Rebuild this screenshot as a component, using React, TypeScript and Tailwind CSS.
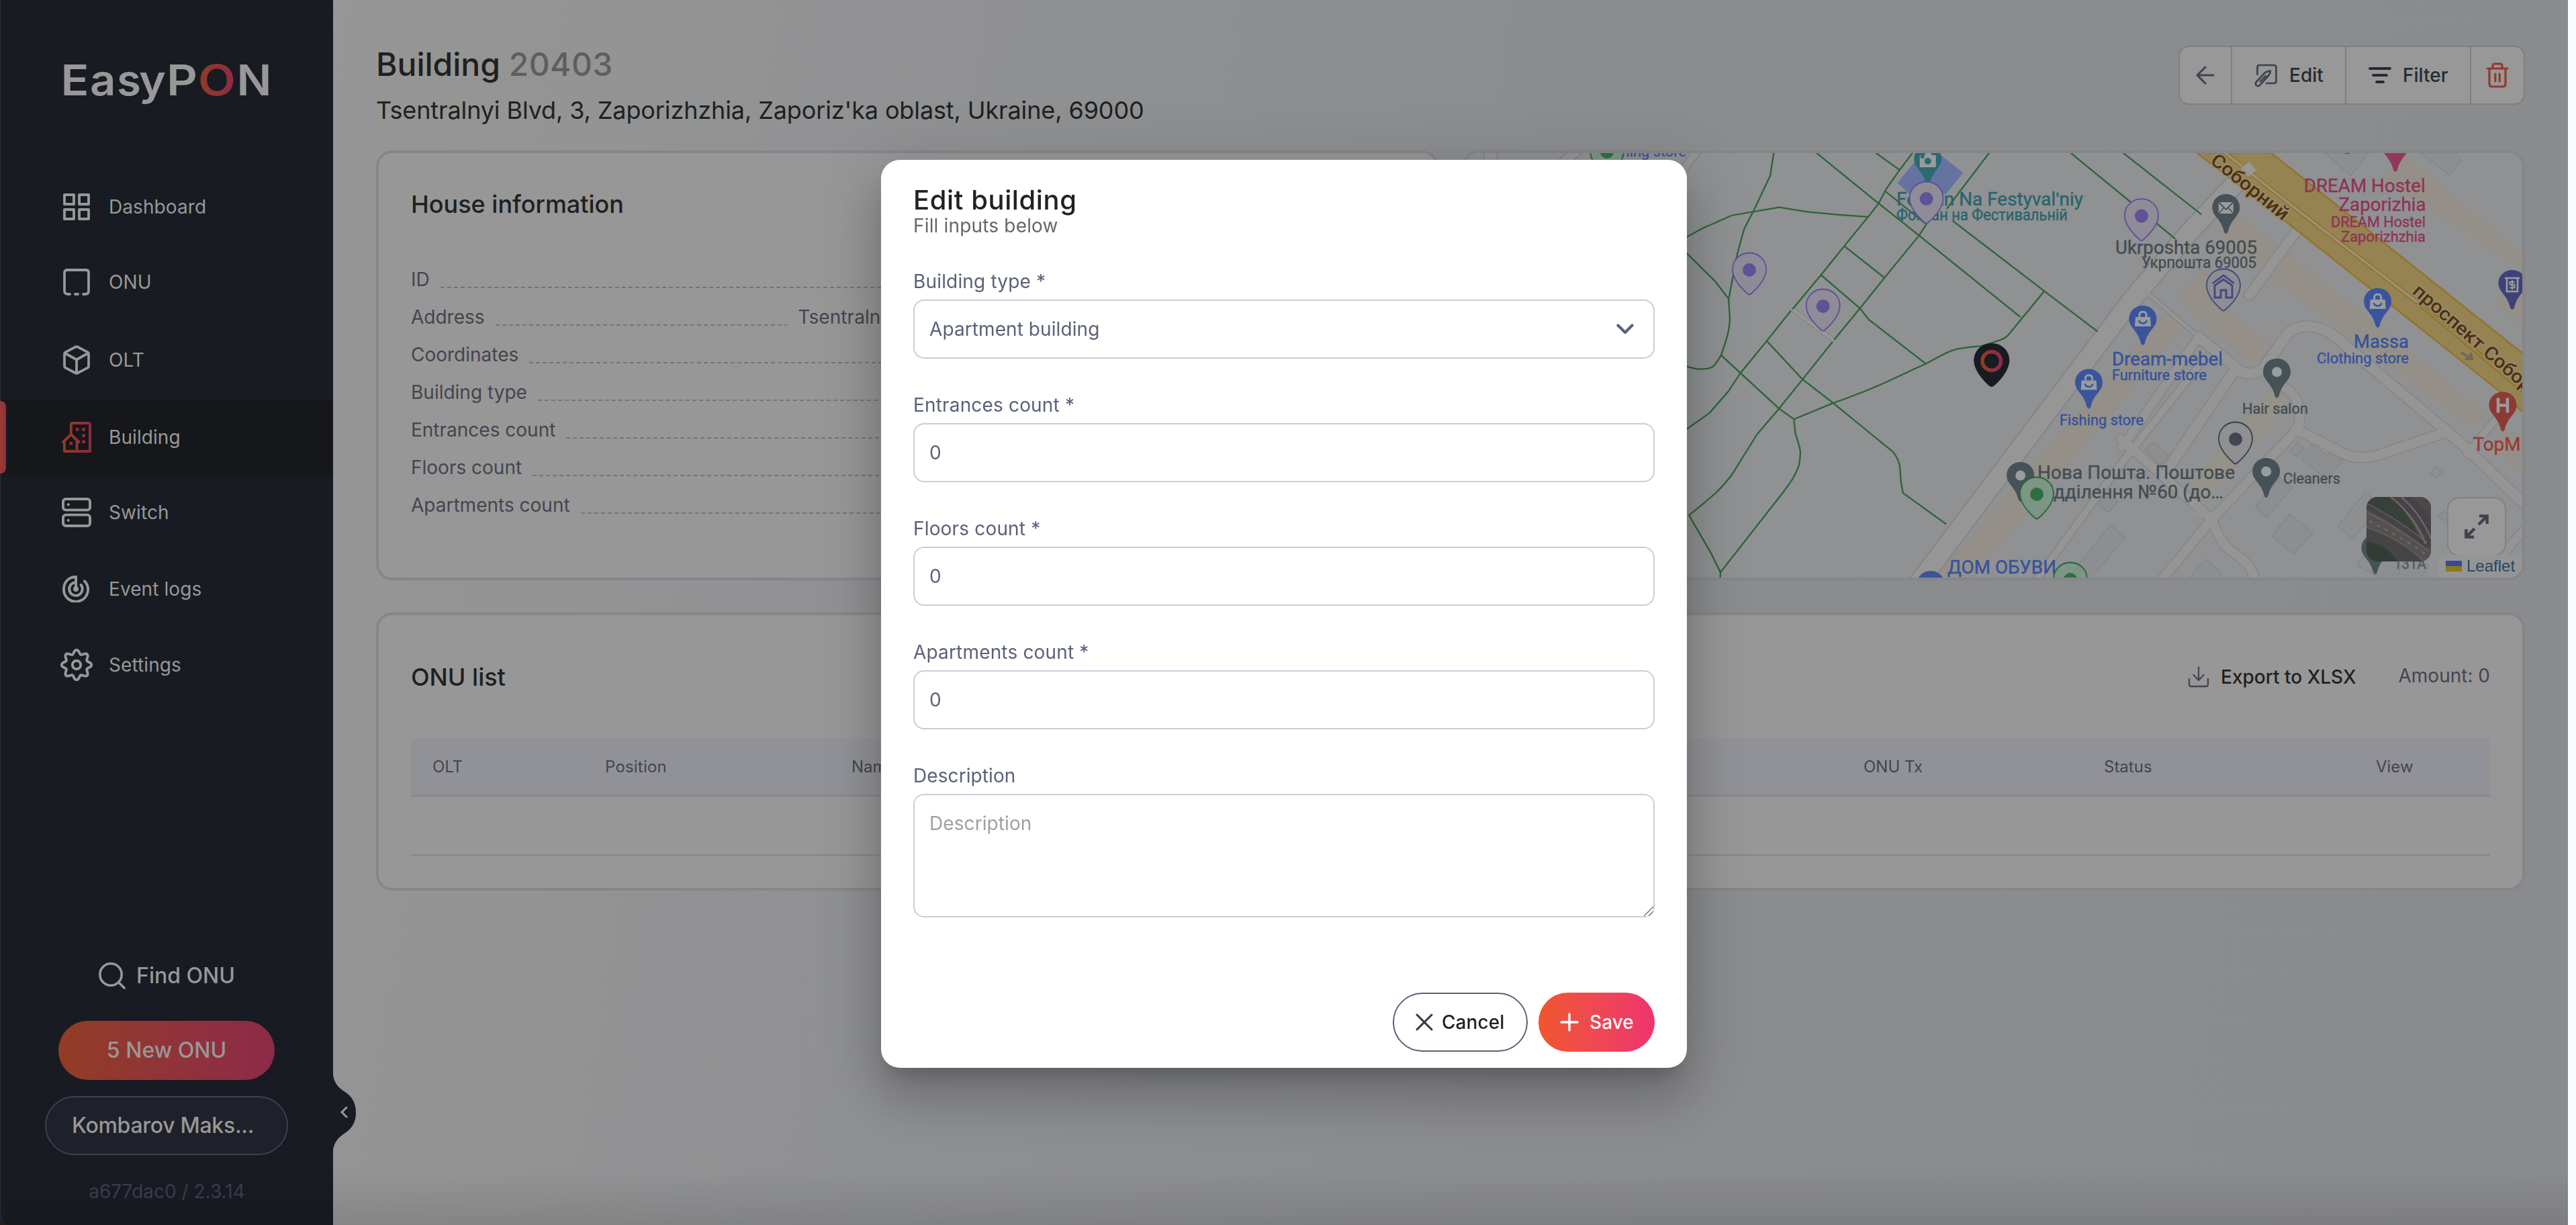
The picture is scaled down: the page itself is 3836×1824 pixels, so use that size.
import React from "react";

const ROADS_EAST: { d: string; w: number }[] = [
  { d: "M265,680 L395,790 C430,825 475,815 500,775 L560,685 C595,625 690,625 760,700 L1090,990 L1190,1080 L1400,1290", w: 36 },
  { d: "M600,1010 L740,1085 C800,1120 830,1115 880,1105 L1110,1025", w: 34 },
  { d: "M550,855 C610,885 625,940 608,1010 L460,1170 L310,1335 L130,1560", w: 32 },
  { d: "M385,805 L160,1150", w: 36 },
  { d: "M262,685 L0,1075", w: 30 },
  { d: "M-5,1045 L310,1335 C340,1420 360,1440 400,1465 C435,1490 455,1520 460,1560", w: 32 },
  { d: "M598,305 L440,530", w: 34 },
  { d: "M80,515 L265,680", w: 12 },
  { d: "M1190,1100 L1300,965", w: 24 },
  { d: "M1400,1360 L1230,1560", w: 30 },
];

const PATHS_WEST = [
  "M326,18 L314,100 L255,230 L225,290 C205,360 195,400 190,440 L171,545 L175,610 C175,660 160,700 145,745 C120,790 115,795 75,795 C50,795 35,788 0,775",
  "M0,335 L28,320 L80,290 L182,243 L345,214 L440,230 L550,241 L650,248",
  "M0,345 L28,380 L125,480 L171,543",
  "M472,18 L686,200 L825,315 L1173,608",
  "M676,18 L758,80",
  "M803,18 L758,80 L711,150 L686,200 L650,248 L568,353 L488,457 L390,580",
  "M385,585 L302,694 L211,810 L170,875 L105,953 L0,1030",
  "M1066,18 L970,150 L920,220",
  "M850,275 L825,315 L706,467 L622,577 L533,690",
  "M528,697 L425,832 L344,937 L268,1030 L185,1170 C150,1220 130,1240 35,1320 L110,1455 L143,1525 L141,1560",
  "M711,158 L850,275",
  "M568,353 L706,467",
  "M488,457 L622,577 L652,617 L848,776",
  "M302,694 L425,832 L530,917 L735,1092 C750,1112 757,1130 759,1145 C761,1190 765,1220 770,1240 L918,1352",
  "M145,745 L344,937 L395,975",
  "M395,975 L530,917 C700,855 750,820 848,776 C940,725 930,722 1040,712 C1120,685 1120,690 1145,655 L1255,515",
  "M395,975 L400,1025 C420,1090 420,1090 413,1140 C395,1190 380,1205 360,1235 L143,1525",
  "M940,262 L1255,515 L1438,660",
  "M1345,18 L1705,327",
  "M1525,18 L1795,240",
];

const GRAY_BUILDINGS = [
  "M110,1058 L160,1105 L130,1140 L80,1085 Z",
  "M605,1058 L630,1080 L602,1110 L580,1090 Z",
  "M655,1065 L710,1105 L725,1090 L765,1125 L705,1190 L618,1115 Z",
  "M545,1185 L588,1220 L500,1328 L460,1290 Z",
  "M580,1315 L660,1385 L635,1410 L592,1460 L517,1395 Z",
  "M840,1237 L900,1290 L795,1403 L745,1360 Z",
  "M1085,1145 L1108,1165 L1085,1188 L1065,1168 Z",
  "M1110,1305 L1145,1335 L1130,1352 L1092,1325 Z",
  "M290,1478 L346,1530 L320,1560 L220,1560 Z",
  "M700,18 L850,18 L790,100 Z",
  "M1030,18 L1155,18 L1172,45 L1130,98 Z",
  "M865,1420 L960,1500 L920,1560 L810,1500 Z",
  "M980,1470 L1060,1500 L1020,1560 L940,1560 Z",
];

type Pin = { x: number; y: number; stroke: string; fill: string; dot?: string };
const PINS: Pin[] = [
  { x: 2605, y: 402, stroke: "#5c4f9a", fill: "#8f8c98", dot: "#5f5297" },
  { x: 2714.7, y: 456, stroke: "#5c4f9a", fill: "#8f8c98", dot: "#5f5297" },
  { x: 2868.6, y: 296, stroke: "#5c4f9a", fill: "#8f8c98", dot: "#5f5297" },
  { x: 3189, y: 321.6, stroke: "#5c4f9a", fill: "#8f8c98", dot: "#5f5297" },
  { x: 3033, y: 736, stroke: "#22683a", fill: "#7d9584", dot: "#2e6f41" },
  { x: 3083, y: 863, stroke: "#22683a", fill: "#7d9584", dot: "#2e6f41" },
  { x: 2393, y: 226, stroke: "#22683a", fill: "#7d9584", dot: "#2e6f41" },
  { x: 3329, y: 654, stroke: "#3b3e4a", fill: "#8e9092", dot: "#43454f" },
  { x: 3311, y: 426, stroke: "#45487a", fill: "#8c8d95" },
];

type Place = { x: number; y: number; fill: string; kind: "dot" | "bag" | "mail" | "camera" | "bank" | "hotel" };
const PLACES: Place[] = [
  { x: 2870.8, y: 237, fill: "#2a6a72", kind: "camera" },
  { x: 3314.8, y: 309, fill: "#465257", kind: "mail" },
  { x: 3191, y: 475, fill: "#3a549c", kind: "bag" },
  { x: 3110.6, y: 569.5, fill: "#3a549c", kind: "bag" },
  { x: 3008.7, y: 708, fill: "#465257", kind: "dot" },
  { x: 3390.6, y: 553.7, fill: "#465257", kind: "dot" },
  { x: 3540.7, y: 449, fill: "#3a549c", kind: "bag" },
  { x: 3374.7, y: 702, fill: "#465257", kind: "dot" },
  { x: 3727, y: 603.5, fill: "#8d3a35", kind: "hotel" },
  { x: 3741, y: 422, fill: "#3f4278", kind: "bank" },
  { x: 3567, y: 217, fill: "#94385a", kind: "dot" },
  { x: 2875, y: 870, fill: "#3a549c", kind: "dot" },
  { x: 3537, y: 816, fill: "#465257", kind: "dot" },
];

type Label = { t: string; x: number; y: number; w: number; s: number; c: string };
const TEAL = "#28646b";
const SLATE = "#434c52";
const BLUE = "#35519a";
const ROSE = "#8f3353";
const LABELS: Label[] = [
  { t: "Fontan Na Festyvalʹniy", x: 2824, y: 306, w: 278, s: 28, c: TEAL },
  { t: "Фонтан на Фестивальній", x: 2824, y: 328, w: 255, s: 23, c: TEAL },
  { t: "Ukrposhta 69005", x: 3150, y: 377.6, w: 211, s: 28, c: SLATE },
  { t: "Укрпошта 69005", x: 3189, y: 399, w: 171, s: 23, c: SLATE },
  { t: "Dream-mebel", x: 3145, y: 544, w: 165, s: 28, c: BLUE },
  { t: "Furniture store", x: 3145, y: 566, w: 141, s: 22, c: BLUE },
  { t: "Fishing store", x: 3067, y: 633, w: 125, s: 22, c: BLUE },
  { t: "Massa", x: 3505, y: 517.6, w: 82, s: 28, c: BLUE },
  { t: "Clothing store", x: 3450, y: 541, w: 137, s: 22, c: BLUE },
  { t: "Hair salon", x: 3339, y: 616, w: 98, s: 22, c: SLATE },
  { t: "Нова Пошта. Поштове", x: 3034, y: 713, w: 294, s: 28, c: SLATE },
  { t: "Відділення №60 (до…", x: 3034, y: 741.5, w: 277, s: 28, c: SLATE },
  { t: "Cleaners", x: 3400, y: 719.5, w: 85, s: 22, c: SLATE },
  { t: "DREAM Hostel", x: 3430.7, y: 285.5, w: 181, s: 28, c: ROSE },
  { t: "Zaporizhia", x: 3482.5, y: 314, w: 130, s: 28, c: ROSE },
  { t: "DREAM Hostel", x: 3471, y: 338, w: 141, s: 22, c: ROSE },
  { t: "Zaporizhzhia", x: 3486, y: 360, w: 126, s: 22, c: ROSE },
  { t: "TopM", x: 3682.5, y: 671, w: 71, s: 28, c: "#963a35" },
  { t: "131A", x: 3565, y: 847, w: 48, s: 22, c: "#55585c" },
  { t: "ДОМ ОБУВИ", x: 2900, y: 854, w: 162, s: 28, c: BLUE },
  { t: "Fishing store", x: 2386, y: 233, w: 125, s: 22, c: "#3a549c" },
];

function PlaceGlyph({ kind }: { kind: Place["kind"] }) {
  const c = "#999c9e";
  if (kind === "bag")
    return (
      <g fill="none" stroke={c}>
        <path d="M-11,-3 H11 L12,11 H-12 Z" fill={c} stroke="none" />
        <path d="M-5,-3 V-7 C-5,-12 5,-12 5,-7 V-3" strokeWidth="3" />
        <path d="M-6,2 C-4,8 4,8 6,2" stroke="#3a549c" strokeWidth="2.4" />
      </g>
    );
  if (kind === "mail")
    return (
      <g>
        <rect x="-11" y="-8" width="22" height="17" fill={c} />
        <path d="M-11,-8 L0,3 L11,-8 M-11,9 L-3,0 M11,9 L3,0" fill="none" stroke="#465257" strokeWidth="1.8" />
      </g>
    );
  if (kind === "camera")
    return (
      <g>
        <path d="M-11,-6 H-5 L-3,-9 H4 L6,-6 H12 V12 H-12 V-6 Z" fill={c} />
        <circle cx="0" cy="3" r="5" fill="#2a6a72" />
        <circle cx="-8" cy="-4" r="3" fill="#2a6a72" />
      </g>
    );
  if (kind === "bank")
    return (
      <g fill="none" stroke={c}>
        <path d="M-11,-8 H11 M-8,-8 V12 H8 V-8" strokeWidth="2.6" />
        <path d="M4,-2 H-3.5 V2 H3.5 V6.5 H-4 M0,-5 V9.5" strokeWidth="2" />
      </g>
    );
  if (kind === "hotel") return <path d="M-7,-11 V11 M7,-11 V11 M-7,0 H7" fill="none" stroke={c} strokeWidth="4.5" />;
  return <circle r="7.5" fill={c} />;
}

function CityMap() {
  return (
    <svg className="absolute inset-0 h-full w-full" viewBox="2182 228 1574 632" preserveAspectRatio="none" fontFamily="Roboto, sans-serif">
      <rect x="2182" y="228" width="1574" height="632" fill="#8f9193" />
      <g fill="none" stroke="#838486">
        <path d="M2214,262 L2222,222" strokeWidth="22" />
        <path d="M2214,262 L2222,222" stroke="#949494" strokeWidth="18" />
        <path d="M2320,250 L2350,222" strokeWidth="18" />
        <path d="M2320,250 L2350,222" stroke="#949494" strokeWidth="14" />
        <path d="M2508,250 L2530,222" strokeWidth="14" />
        <path d="M2508,250 L2530,222" stroke="#949494" strokeWidth="10" />
      </g>

      {/* Tinted blocks along the avenue */}
      <g transform="translate(3160 220) scale(0.43113 0.41454)" fill="#949089" stroke="#97877a" strokeWidth="2">
        <path d="M390,225 L1255,945 L1210,1010 L330,330 Z" stroke="none" />
        <path d="M290,415 L188,550 L465,787 L515,712 L345,560 Z" />
        <path d="M165,570 L225,625 L-20,930 L-720,1800 L-860,1800 L-20,800 Z" />
        <path d="M975,18 L1400,395 L1400,455 L900,110 Z" stroke="none" />
        <path d="M1325,510 L1285,562 L1400,650 L1400,500 Z" />
        <path d="M1310,1010 L1270,1085 L1400,1185 L1400,1050 Z" stroke="none" />
        <path d="M520,860 L575,905 L290,1270 L235,1215 Z" fill="#95928a" stroke="#978c6e" />
      </g>
      <g transform="translate(3160 220) scale(0.43113 0.41454)" fill="#8c8e90" stroke="#828486" strokeWidth="3">
        {GRAY_BUILDINGS.map((d) => (
          <path key={d} d={d} />
        ))}
        <path d="M-40,1355 L10,1400 L-150,1600 L-230,1600 Z" />
        <path d="M-70,1245 L-15,1270 L-45,1310 L-80,1285 Z" />
        <path d="M20,1085 L90,1150 L60,1200 L0,1130 Z" fill="none" />
      </g>

      {/* Streets */}
      <g transform="translate(3160 220) scale(0.43113 0.41454)" fill="none" strokeLinejoin="round" strokeLinecap="round">
        <path d="M-730,1600 L35,545 L235,300 L390,130 L470,20" stroke="#808284" strokeWidth="72" />
        <path d="M-330,1600 L0,1130 L260,790" stroke="#808284" strokeWidth="30" />
        {ROADS_EAST.map((r) => (
          <path key={r.d} d={r.d} stroke="#818385" strokeWidth={r.w + 6} />
        ))}
        <path d="M-730,1600 L35,545 L235,300 L390,130 L470,20" stroke="#969696" strokeWidth="64" />
        <path d="M-330,1600 L0,1130 L260,790" stroke="#959595" strokeWidth="24" />
        {ROADS_EAST.map((r) => (
          <path key={r.d} d={r.d} stroke="#959596" strokeWidth={r.w} />
        ))}
        <path d="M240,1310 L310,1335 M200,1220 L290,1330" stroke="#959596" strokeWidth="10" />
      </g>

      {/* Park paths */}
      <g transform="translate(2500 220) scale(0.43367 0.41454)" fill="none">
        <path d="M751,126 L835,18 L890,18 L976,90 L918,165 L800,175 Z" fill="#6573a0" />
        <path d="M390,580 L533,692" stroke="#808284" strokeWidth="16" />
        <path d="M390,580 L533,692" stroke="#979797" strokeWidth="11" />
        <g stroke="#2e6336" strokeWidth="5.4" strokeLinejoin="round">
          {PATHS_WEST.map((d) => (
            <path key={d} d={d} />
          ))}
        </g>
      </g>

      {/* Avenue */}
      <g transform="translate(3160 220) scale(0.43113 0.41454)" fill="none">
        <path d="M258,18 L515,18 L1400,752 L1400,965 L1310,880 L590,285 Z" fill="#958352" stroke="#94711f" strokeWidth="5" />
        <path d="M355,18 L620,235 L1020,555 L1400,885" stroke="#94711f" strokeWidth="16" />
        <path d="M355,18 L620,235 L1020,555" stroke="#98907c" strokeWidth="9" />
        <path d="M1020,555 L1400,885" stroke="#958352" strokeWidth="8" />
        <path d="M425,62 L450,92" stroke="#989898" strokeWidth="36" />
        <path d="M1172,735 L1200,755" stroke="#6f6a55" strokeWidth="8" />
        <path d="M1182,762 L1215,763 L1207,733 Z" fill="#6f6a55" />
        <path d="M770,18 L785,18" stroke="#6b3a10" strokeWidth="8" />
      </g>

      {PLACES.map((p) => (
        <g key={`${p.x}-${p.y}`} transform={`translate(${p.x} ${p.y})`}>
          <path d="M0,-20 C12,-20 20.5,-11 20.5,0 C20.5,13 7,17 3,36 Q0,42 -3,36 C-7,17 -20.5,13 -20.5,0 C-20.5,-11 -12,-20 0,-20 Z" fill={p.fill} />
          <PlaceGlyph kind={p.kind} />
        </g>
      ))}

      <g strokeLinejoin="round">
        {LABELS.map((l) => (
          <text key={`${l.t}-${l.x}-${l.y}`} x={l.x} y={l.y} fontSize={l.s} fontWeight="400" fill={l.c} stroke={l.c} strokeWidth="0.4" textLength={l.w} lengthAdjust="spacingAndGlyphs">
            {l.t}
          </text>
        ))}
      </g>
      <g fontWeight="500" fontSize="28" fill="#4f3010" stroke="#958a6a" strokeWidth="4" paintOrder="stroke" strokeLinejoin="round">
        <text transform="translate(3290 242) rotate(38.5)" textLength="140" lengthAdjust="spacingAndGlyphs">Соборний</text>
        <text transform="translate(3591 436) rotate(41)" textLength="278" lengthAdjust="spacingAndGlyphs">проспект Соборний</text>
      </g>

      {PINS.map((p) => (
        <g key={`${p.x}-${p.y}`} transform={`translate(${p.x} ${p.y})`}>
          <path d="M0,-25.5 C14,-25.5 25,-14.5 25,-1 C25,14 11,28 2.5,35.5 Q0,37.5 -2.5,35.5 C-11,28 -25,14 -25,-1 C-25,-14.5 -14,-25.5 0,-25.5 Z" fill={p.fill} stroke={p.stroke} strokeWidth="1.8" />
          {p.dot ? (
            <circle r="10" fill={p.dot} />
          ) : (
            <path d="M-16,-4 L0,-16 L16,-4 M-13,-1 V17 H-4 V6 H4 V17 H13 V-1 L0,-10 Z" fill="none" stroke="#45487a" strokeWidth="2.8" />
          )}
        </g>
      ))}
      <g transform="translate(2965.8 537.5)">
        <path d="M0,-26.5 C15,-26.5 26.5,-15 26.5,-1 C26.5,14 12,30 3,37.5 Q0,39.5 -3,37.5 C-12,30 -26.5,14 -26.5,-1 C-26.5,-15 -15,-26.5 0,-26.5 Z" fill="#191b22" />
        <circle r="13.8" fill="none" stroke="url(#brand)" strokeWidth="5.4" />
      </g>
    </svg>
  );
}

function Satellite() {
  return (
    <svg className="h-24 w-24" viewBox="0 0 96 96">
      <rect width="96" height="96" fill="#504e4d" />
      <path d="M8,0 H36 Q62,22 80,62 L56,48 L0,10 V6 Z" fill="#374039" />
      <path d="M0,14 L88,70 L96,96 L70,96 L0,50 Z" fill="#565151" />
      <path d="M0,14 Q50,40 92,74" fill="none" stroke="#45424a" strokeWidth="8" />
      <path d="M0,9 Q50,35 90,68 M0,22 Q50,48 94,81" fill="none" stroke="#6b665f" strokeWidth="1.2" />
      <path d="M4,36 Q50,58 92,88" fill="none" stroke="#77716c" strokeWidth="1.6" strokeDasharray="5 8" />
      <path d="M0,46 Q50,62 84,96 H44 Q24,70 0,66 Z" fill="#454545" />
      <path d="M0,45 Q50,62 84,94" fill="none" stroke="#66615b" strokeWidth="1.2" />
      <path d="M0,66 Q30,70 46,96 H0 Z" fill="#323c35" />
      <path d="M38,0 Q76,30 92,70 L96,80 V0 Z" fill="#474249" />
      <path d="M36,0 Q70,26 88,70 M52,0 Q80,24 96,62" fill="none" stroke="#726c65" strokeWidth="2" />
      <path d="M66,0 Q86,14 96,34 V0 Z" fill="#4b4847" />
    </svg>
  );
}

const icon = "fill-none stroke-current";

function gearPath() {
  const pts: string[] = [];
  for (let i = 0; i < 160; i++) {
    const a = (i / 160) * Math.PI * 2;
    const r = 19.4 + 2.9 * Math.cos(8 * a);
    pts.push(`${(24 + r * Math.sin(a)).toFixed(2)},${(24 - r * Math.cos(a)).toFixed(2)}`);
  }
  return `M${pts.join("L")}Z`;
}

function DashboardIcon() {
  return (
    <svg className={`h-10 w-10 ${icon}`} viewBox="0 0 40 40" strokeWidth="3.9" strokeLinejoin="round">
      <path d="M2,2 H16 V16 H2 Z M24,2 H38 V16 H24 Z M2,24 H16 V38 H2 Z M24,24 H38 V38 H24 Z" />
    </svg>
  );
}
function OnuIcon() {
  return (
    <svg className={`h-10 w-10 ${icon}`} viewBox="0 0 40 40" strokeWidth="3.8" strokeLinecap="round">
      <path d="M10,38 H7 Q2,38 2,33 V6 Q2,2 6,2 H34 Q38,2 38,6 V33 Q38,38 33,38 H30 M18,38 H22" />
    </svg>
  );
}
function CubeIcon() {
  return (
    <svg className={`h-11 w-10 ${icon}`} viewBox="0 0 40 44" strokeWidth="3.8" strokeLinejoin="round">
      <path d="M18.5,2.5 Q20,1.7 21.5,2.5 L36.5,10.4 Q38,11.4 38,13 V31 Q38,32.8 36.5,33.6 L21.5,41.5 Q20,42.3 18.5,41.5 L3.5,33.6 Q2,32.8 2,31 V13 Q2,11.4 3.5,10.4 Z M3,12 L20,21.5 L37,12 M20,21.5 V42" />
    </svg>
  );
}
function BuildingIcon() {
  return (
    <svg className="h-[46px] w-11" viewBox="0 0 44 46" fill="none" stroke="url(#brand)" strokeWidth="3.9" strokeLinejoin="round" strokeLinecap="round">
      <path d="M13.8,18 V5 Q13.8,2 16.8,2 H39 Q42,2 42,5 V44 H3.9 V31 M2,30 L13.8,19 L25.5,30 M22.5,29 V44" />
      <path d="M20.8,11.5 h4.4 M30.3,11.5 h4.4 M30.3,20.5 h4.4 M30.3,29.8 h4.4 M11.5,32.2 h4.4" strokeLinecap="butt" strokeWidth="4.4" stroke="#913038" />
    </svg>
  );
}
function SwitchIcon() {
  return (
    <svg className={`h-11 w-11 ${icon}`} viewBox="0 0 44 44" strokeWidth="3.9">
      <rect x="2" y="2" width="40" height="16.4" rx="4" />
      <rect x="2" y="25.6" width="40" height="16.4" rx="4" />
      <circle cx="9.7" cy="10.2" r="2" className="fill-current stroke-none" />
      <circle cx="9.7" cy="33.8" r="2" className="fill-current stroke-none" />
    </svg>
  );
}
function EventIcon() {
  return (
    <svg className={`mr-0.5 h-10 w-10 ${icon}`} viewBox="0 0 40 40" strokeWidth="3.9" strokeLinecap="round">
      <path d="M20,20 V2 C9,2 2,10 2,20 A18,18 0 1 0 33,8.4" />
      <path d="M18,10.4 A9.8,9.8 0 1 0 27.5,13.8" />
      <circle cx="20" cy="20" r="4" className="fill-current stroke-none" />
    </svg>
  );
}
function SettingsIcon() {
  return (
    <svg className={`h-12 w-12 ${icon}`} viewBox="0 0 48 48" strokeWidth="3.9" strokeLinejoin="round">
      <path d={gearPath()} />
      <circle cx="24" cy="24" r="6.2" />
    </svg>
  );
}

const NAV = [
  { label: "Dashboard", Icon: DashboardIcon, box: "h-28" },
  { label: "ONU", Icon: OnuIcon, box: "h-28" },
  { label: "OLT", Icon: CubeIcon, box: "h-[119px]" },
  { label: "Building", Icon: BuildingIcon, box: "h-28", active: true },
  { label: "Switch", Icon: SwitchIcon, box: "h-28" },
  { label: "Event logs", Icon: EventIcon, box: "h-[115px]" },
  { label: "Settings", Icon: SettingsIcon, box: "h-28" },
];

function Sidebar() {
  return (
    <aside className="relative flex h-full w-[496px] shrink-0 flex-col rounded-bl-[14px] border-l border-[#2b2f36] bg-[#181b22] pt-20 text-[#989898]">
      <svg className="ml-[83px] h-[90px] w-[330px]" viewBox="84 80 330 90" fontFamily="Inter, sans-serif" fontWeight="600" fontSize="63" fill="#989898">
        <defs>
          <linearGradient id="brand" x1="0" x2="1" y1="0" y2="0">
            <stop offset="0" stopColor="#923c24" />
            <stop offset="1" stopColor="#8e2a48" />
          </linearGradient>
        </defs>
        <text y="142" x="90.5" textLength="42" lengthAdjust="spacingAndGlyphs">E</text>
        <text y="142" x="134" textLength="38.5" lengthAdjust="spacingAndGlyphs">a</text>
        <text y="142" x="174" textLength="36" lengthAdjust="spacingAndGlyphs">s</text>
        <text y="142" x="207" textLength="40" lengthAdjust="spacingAndGlyphs">y</text>
        <text y="142" x="248" textLength="46" lengthAdjust="spacingAndGlyphs">P</text>
        <text y="142" x="295" fill="url(#brand)" textLength="56" lengthAdjust="spacingAndGlyphs">O</text>
        <text y="142" x="352.5" textLength="52" lengthAdjust="spacingAndGlyphs">N</text>
      </svg>

      <nav className="mt-[82px] flex flex-col">
        {NAV.map(({ label, Icon, box, active }) => (
          <a key={label} className={`relative flex items-center pl-[83px] text-[28px] leading-none ${box} ${active ? "bg-[#16171a]" : ""}`}>
            {active && <span className="absolute top-0.5 -left-px h-[108px] w-[9px] rounded-r-lg bg-linear-to-r from-[#973f2c] to-[#8e2c46]" />}
            <span className="flex w-15 justify-center">
              <Icon />
            </span>
            <span className="ml-[18px] tracking-[0.003em]">{label}</span>
          </a>
        ))}
      </nav>

      <div className="mt-auto flex flex-col items-center pb-[30px] font-medium">
        <div className="flex h-[88px] w-[392px] items-center justify-center rounded-lg border border-[#16191d] pt-0.5 text-[32px]">
          <svg className={`mr-4 h-10 w-10 ${icon}`} viewBox="0 0 40 40" strokeWidth="3.6" strokeLinecap="round">
            <circle cx="18" cy="18" r="16.2" />
            <path d="M30,30 L38,38" />
          </svg>
          Find ONU
        </div>
        <div className="mt-6 mr-px flex h-[88px] w-[322px] items-center justify-center rounded-full bg-linear-to-r from-[#923c24] to-[#8e2a48] text-[32px]">5 New ONU</div>
        <div className="mt-6 mr-px flex h-[88px] w-[362px] items-center rounded-full border-2 border-[#3d404f] bg-[#1e2129] pl-[38px] text-[32px] tracking-[-0.009em]">Kombarov Maks...</div>
        <div className="mt-[34px] text-[28px] leading-10 font-normal text-[#3c3e4e]">a677dac0 / 2.3.14</div>
      </div>

      <svg className="absolute top-[1601px] left-[494px] z-10 h-28 w-9" viewBox="-1 0 36 112">
        <path d="M-1,0 H0 C2,12 8,18 15,23 C25,29 34,38 34,55.5 C34,73 25,82 15,88 C8,93 2,99 0,111 H-1 Z" fill="#181b22" />
        <path d="M20,48 L13,55 L20,62" fill="none" stroke="#989898" strokeWidth="3" strokeLinecap="round" />
      </svg>
    </aside>
  );
}

function Toolbar() {
  return (
    <div className="mt-0.5 flex h-[88px] w-[516px] divide-x-2 divide-[#7c7e83] overflow-hidden rounded-2xl border-2 border-[#7c7e83] bg-[#989898] text-[28px] font-medium text-[#252a34]">
      <div className="flex w-[78px] items-center justify-center">
        <svg className={`h-7 w-7 text-[#3f424e] ${icon}`} viewBox="0 0 28 28" strokeWidth="3" strokeLinecap="round" strokeLinejoin="round">
          <path d="M26,14 H2 M14,2 L2,14 L14,26" />
        </svg>
      </div>
      <div className="flex w-[170px] items-center pl-[33px]">
        <svg className={`mr-[17px] h-[35px] w-[35px] text-[#3f424e] ${icon}`} viewBox="0 0 35 35" strokeWidth="2.7" strokeLinecap="round" strokeLinejoin="round">
          <path d="M4.5,16 V5 Q4.5,2 7.5,2 H29 Q32.5,2 32.5,5.5 V25.5 Q32.5,29 29,29 H18" />
          <path d="M23.8,10.6 Q18,11 14.5,14.5 L3,27 C0,31 4.5,35 8,32 L20,18.8 Q23.6,15 23.8,10.6 Z M17,18 L9,26" />
        </svg>
        Edit
      </div>
      <div className="flex w-[186px] items-center pl-[33px]">
        <svg className={`mr-[17px] h-6 w-[34px] ${icon}`} viewBox="0 0 34 24" strokeWidth="3.8" strokeLinecap="round">
          <path d="M2,2 H32 M7,12 H27 M12,22 H22" />
        </svg>
        Filter
      </div>
      <div className="flex flex-1 items-center justify-center">
        <svg className={`h-[38px] w-[34px] text-[#93382e] ${icon}`} viewBox="0 0 34 38" strokeWidth="3.2" strokeLinecap="round" strokeLinejoin="round">
          <path d="M2,9 H32 M10,9 V5 Q10,2 13,2 H21 Q24,2 24,5 V9 M5,9 V32 Q5,36 9,36 H25 Q29,36 29,32 V9 M13.8,17 V28 M20.2,17 V28" />
        </svg>
      </div>
    </div>
  );
}

const ADDRESS = "Tsentralnyi Blvd, 3, Zaporizhzhia, Zaporiz'ka oblast, Ukraine, 69000";
const INFO = [
  { k: "ID", v: "20403" },
  { k: "Address", v: ADDRESS },
  { k: "Coordinates", v: "" },
  { k: "Building type", v: "Apartment building" },
  { k: "Entrances count", v: "0" },
  { k: "Floors count", v: "0" },
  { k: "Apartments count", v: "0" },
];

const card = "relative overflow-hidden rounded-3xl border-4 border-[#85868b] bg-[#979797]";

function Page() {
  return (
    <main className="flex h-full flex-1 flex-col bg-[linear-gradient(100deg,#969696_0%,#8f9092_30%,#8b8c8e_55%,#8a8b8d_100%)] px-16 pt-[66px]">
      <header className="flex h-[120px] justify-between">
        <div>
          <h1 className="text-[48px] leading-[60px] font-medium text-[#202020]">
            Building <span className="tracking-[0.008em] text-[#5e5e5e]">20403</span>
          </h1>
          <p className="mt-4 text-[36px] leading-[44px] tracking-[-0.0034em] text-[#202020]">{ADDRESS}</p>
        </div>
        <Toolbar />
      </header>

      <section className="mt-[38px] grid h-[640px] grid-cols-2 gap-9">
        <div className={`${card} px-12 pt-[54px]`}>
          <h2 className="text-[36px] leading-[44px] font-medium text-[#202020]">House information</h2>
          <dl className="mt-[62px] text-[28px] text-[#43454f]">
            {INFO.map((r) => (
              <div key={r.k} className="flex h-14 items-center">
                <dt>{r.k}</dt>
                <span className="mx-4 mt-[23px] h-0.5 flex-1 bg-[repeating-linear-gradient(90deg,#73757b_0_6px,transparent_6px_10px)]" />
                <dd className="tracking-[0.003em]">{r.v}</dd>
              </div>
            ))}
          </dl>
        </div>
        <div className={card}>
          <CityMap />
          <div className="absolute right-[136px] bottom-6 h-24 w-24 overflow-hidden rounded-2xl">
            <Satellite />
          </div>
          <div className="absolute right-6 bottom-8 flex h-22 w-22 items-center justify-center rounded-[18px] border-2 border-[#7f8186] bg-[#989898] text-[#3e424d]">
            <svg className={`h-9 w-9 ${icon}`} viewBox="0 0 36 36" strokeWidth="4.4">
              <path d="M22,2.4 H33.6 V14 M33,3 L21,15 M14,33.6 H2.4 V22 M3,33 L15,21" />
            </svg>
          </div>
          <div className="absolute right-0 bottom-0 flex h-[34px] w-[124px] items-center bg-[#949595] pl-[10px] font-['Liberation_Sans',sans-serif] text-[24px] text-[#25485f]">
            <span className="mr-[7px] flex h-4 w-6 flex-col">
              <span className="flex-1 bg-[#36499b]" />
              <span className="flex-1 bg-[#8f7a14]" />
            </span>
            Leaflet
          </div>
        </div>
      </section>

      <section className={`${card} mt-12 h-[414px] px-12 pt-[70px]`}>
        <div className="flex h-11 items-center">
          <h2 className="mr-auto text-[36px] font-medium text-[#202020]">ONU list</h2>
          <svg className={`h-8 w-8 text-[#43454f] ${icon}`} viewBox="0 0 32 32" strokeWidth="2.3" strokeLinecap="round" strokeLinejoin="round">
            <path d="M2,19 V27 Q2,30 5,30 H27 Q30,30 30,27 V19 M16,1.5 V21 M8.5,13 L16,21 L23.5,13" />
          </svg>
          <span className="ml-[17px] text-[28px] font-medium text-[#1f1f1f]">Export to XLSX</span>
          <span className="mb-1 ml-[63px] text-[28px] text-[#43454f]">Amount: 0</span>
        </div>
        <div className="mt-[70px] grid h-[86px] grid-cols-[257px_367px_1507px_358px_405px_202px] items-center border-b-2 border-[#848484] bg-[#919297] text-[24px] text-[#43454f]">
          <span className="pl-8">OLT</span>
          <span className="pl-8 tracking-[0.008em]">Position</span>
          <span className="pl-8">Name</span>
          <span className="pl-8">ONU Tx</span>
          <span className="pl-8">Status</span>
          <span className="pl-8">View</span>
        </div>
        <div className="h-[88px] border-b-2 border-[#85868a]" />
      </section>
    </main>
  );
}

const FIELDS = [
  { label: "Building type *", value: "Apartment building", select: true },
  { label: "Entrances count *", value: "0" },
  { label: "Floors count *", value: "0" },
  { label: "Apartments count *", value: "0" },
];

function EditDialog() {
  return (
    <div className="fixed inset-y-0 right-3 left-0 flex items-start justify-center pt-[238px]">
      <div className="h-[1352px] w-[1200px] rounded-[28px] bg-white px-12 pt-9 text-[28px] tracking-[0.003em] text-[#5b6079] shadow-[0_22px_30px_-14px_rgba(0,0,0,0.2),0_48px_76px_6px_rgba(0,0,0,0.14),0_18px_92px_16px_rgba(0,0,0,0.12)]">
        <h2 className="text-[40px] leading-[48px] font-medium tracking-[0.015em] text-[#212121]">Edit building</h2>
        <p className="leading-7 tracking-[0.006em] text-[#666666]">Fill inputs below</p>
        <div className="mt-[52px]">
          {FIELDS.map((f) => (
            <div key={f.label} className="mb-[52px]">
              <div className="leading-[34px] tracking-[0.006em]">{f.label}</div>
              <div className="mt-2.5 flex h-[88px] items-center justify-between rounded-2xl border-2 border-[#c9cdd9] pr-[28px] pl-[22px]">
                {f.value}
                {f.select && (
                  <svg className={`h-[18px] w-7 ${icon}`} viewBox="0 0 28 18" strokeWidth="4.2" strokeLinecap="round" strokeLinejoin="round">
                    <path d="M3.5,3.5 L14,14 L24.5,3.5" />
                  </svg>
                )}
              </div>
            </div>
          ))}
          <div className="leading-[34px]">Description</div>
          <div className="relative mt-2.5 h-[184px]">
            <textarea className="block h-full w-full resize-none rounded-2xl border-2 border-[#c9cdd9] px-[22px] py-[22px] leading-10 placeholder:text-[#a0a0a0]" placeholder="Description" />
            <svg className="absolute right-0.5 bottom-0.5 h-[14px] w-[14px] bg-white" viewBox="0 0 14 14" fill="none" stroke="#555555" strokeWidth="1.2">
              <path d="M0,14 L14,0 M7,14 L14,7" />
            </svg>
          </div>
        </div>
        <div className="mt-28 flex justify-end gap-4 font-medium">
          <button className="flex h-[88px] w-[201px] items-center rounded-full border-2 border-[#5b6079] pl-8 text-[#212121]">
            <svg className={`mr-[13px] h-[26px] w-[26px] text-[#33374a] ${icon}`} viewBox="0 0 26 26" strokeWidth="3" strokeLinecap="round">
              <path d="M2,2 L24,24 M24,2 L2,24" />
            </svg>
            Cancel
          </button>
          <button className="flex h-[88px] w-[173px] items-center rounded-full bg-linear-to-r from-[#f0562c] to-[#ee346d] pl-8 text-white">
            <svg className={`mr-4 h-7 w-7 ${icon}`} viewBox="0 0 28 28" strokeWidth="3.4" strokeLinecap="round">
              <path d="M14,2 V26 M2,14 H26" />
            </svg>
            Save
          </button>
        </div>
      </div>
    </div>
  );
}

export default function App() {
  return (
    <div className="relative flex h-[1824px] w-[3836px] overflow-hidden bg-[#2a1d18] font-['Inter',sans-serif]">
      <Sidebar />
      <Page />
      <div className="w-3 shrink-0 bg-[#fafbfe]" />
      <div className="pointer-events-none absolute right-3 bottom-0 left-2 h-20 bg-linear-to-b from-transparent to-black/10" />
      <EditDialog />
    </div>
  );
}
